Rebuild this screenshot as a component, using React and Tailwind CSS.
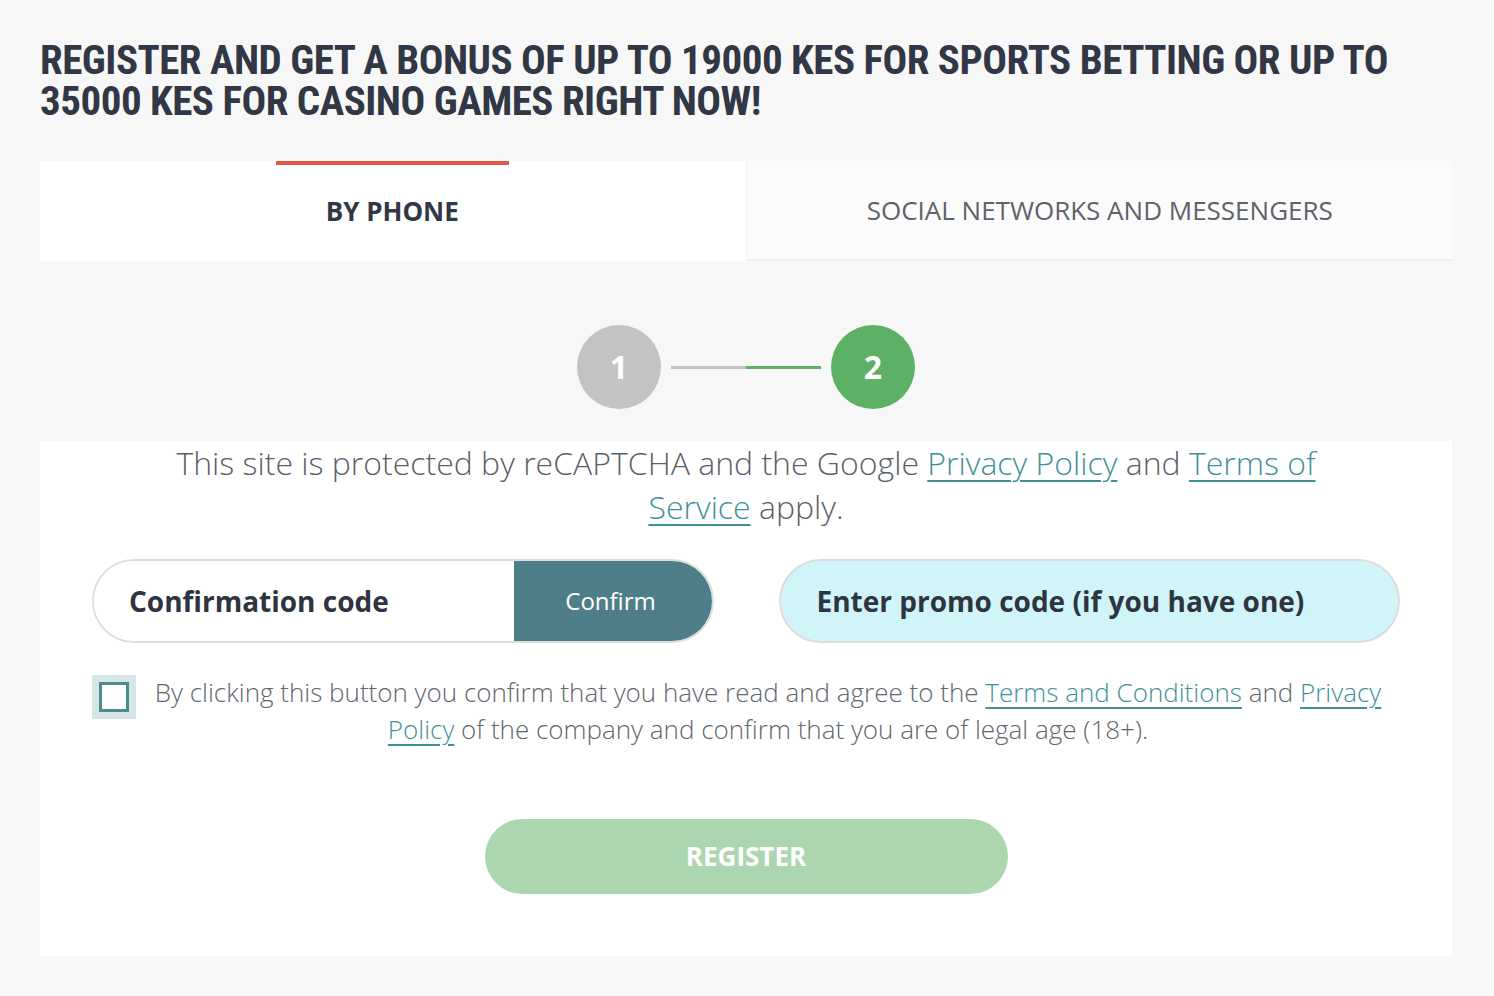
import React, { useState } from "react";

const sans = { fontFamily: '"Open Sans", "Noto Sans", sans-serif' };
const cond = {
  fontFamily: '"Roboto Condensed", "Liberation Sans Narrow", "DejaVu Sans Condensed", Roboto, sans-serif',
};

const Link = ({ children }) => (
  <a href="#" className="text-[#3f9199] underline decoration-2 underline-offset-[5px]">
    {children}
  </a>
);

const Registration = () => {
  const [tab, setTab] = useState("phone");
  const [agree, setAgree] = useState(false);

  return (
    <div className="min-h-[996px] bg-[#f7f7f7] pl-10 pr-[42px] pt-[40px] pb-[41px]" style={sans}>
      <h1
        className="text-[41px] leading-[41px] font-bold text-[#313744] uppercase tracking-[-0.5px]"
        style={cond}
      >
        Register and get a bonus of up to 19000 KES for sports betting or up to 35000 KES for casino games right now!
      </h1>

      {/* tabs */}
      <div className="mt-[39px] flex gap-[3px]">
        <button
          onClick={() => setTab("phone")}
          className="flex-1 h-[100px] bg-white flex items-center justify-center relative"
        >
          <span className="absolute top-0 left-[236px] w-[233px] h-1 bg-[#e0574a]" />
          <span className="text-[26px] font-bold text-[#313744]">BY PHONE</span>
        </button>
        <button
          onClick={() => setTab("social")}
          className="flex-1 h-[100px] bg-[#fbfbfb] border-b-2 border-[#efefef] flex items-center justify-center"
        >
          <span className="text-[26px] text-[#5e626b]">SOCIAL NETWORKS AND MESSENGERS</span>
        </button>
      </div>

      {/* steps */}
      <div className="h-[180px] pt-[64px] flex items-start justify-center">
        <div className="w-[84px] h-[84px] rounded-full bg-[#c3c3c3] flex items-center justify-center text-white text-[32px] font-bold">
          1
        </div>
        <div className="mx-[10px] mt-[41px] flex w-[150px] h-[3px]">
          <div className="flex-1 bg-[#c3c3c3]" />
          <div className="flex-1 bg-[#5cb164]" />
        </div>
        <div className="w-[84px] h-[84px] rounded-full bg-[#5cb164] flex items-center justify-center text-white text-[32px] font-bold">
          2
        </div>
      </div>

      {/* form */}
      <div className="bg-white pb-[62px] px-[52px]">
        <p className="text-center text-[32px] leading-[44px] font-light text-[#5c5f68] px-[80px]">
          This site is protected by reCAPTCHA and the Google <Link>Privacy Policy</Link> and{" "}
          <Link>Terms of Service</Link> apply.
        </p>

        <div className="mt-[30px] grid grid-cols-2 gap-[65px]">
          <div className="h-[84px] flex rounded-full border-2 border-[#dedede] overflow-hidden">
            <input
              placeholder="Confirmation code"
              className="flex-1 min-w-0 pl-[35px] text-[28px] font-bold text-[#2e3440] placeholder:text-[#2e3440] outline-none bg-white"
            />
            <button className="w-[200px] -my-[2px] -mr-[2px] pr-[6px] bg-[#4e7f89] text-white text-[24px] rounded-r-full">
              Confirm
            </button>
          </div>
          <input
            placeholder="Enter promo code (if you have one)"
            className="min-w-0 h-[84px] rounded-full border-2 border-[#dcdcdc] bg-[#d1f4f8] pl-[36px] text-[28px] font-bold text-[#2e3440] placeholder:text-[#2e3440] outline-none"
          />
        </div>

        <div className="mt-[32px] flex items-start">
          <button
            onClick={() => setAgree(!agree)}
            className="shrink-0 w-[44px] h-[44px] bg-[#d6e5e5] flex items-center justify-center"
          >
            <span className="w-[30px] h-[30px] border-[3px] border-[#4b8c93] bg-white flex items-center justify-center text-[#4b8c93] text-[20px] leading-none">
              {agree ? "✓" : ""}
            </span>
          </button>
          <p className="flex-1 -mt-[1px] text-center text-[26px] leading-[37px] font-light text-[#62666e] px-[11px]">
            By clicking this button you confirm that you have read and agree to the{" "}
            <Link>Terms and Conditions</Link> and <Link>Privacy Policy</Link> of the company and confirm
            that you are of legal age (18+).
          </p>
        </div>

        <div className="mt-[71px] flex justify-center">
          <button className="w-[523px] h-[75px] rounded-full bg-[#acd6b0] text-white text-[26px] font-bold">
            REGISTER
          </button>
        </div>
      </div>
    </div>
  );
};

export default function App() {
  return <Registration />;
}
